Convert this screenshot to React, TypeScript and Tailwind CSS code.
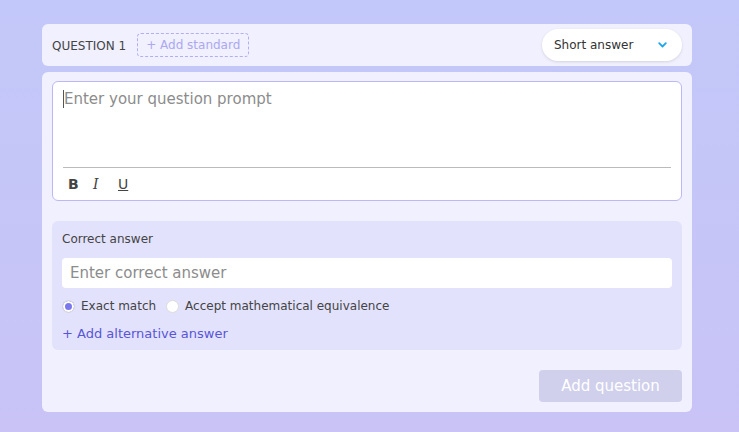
import React, { useState } from 'react';

export default function App() {
  const [match, setMatch] = useState('exact');

  return (
    <main
      className="min-h-screen w-full bg-gradient-to-b from-[#c2c8f9] to-[#c9c3f6] pl-[42px] pr-[47px] pt-[24px] pb-5 text-[#444]"
      style={{ fontFamily: "'DejaVu Sans', Verdana, sans-serif" }}
    >
      <div className="flex h-[42px] items-center justify-between rounded-md bg-[#f0f0fe] pl-[10px] pr-[10px]">
        <div className="flex items-center gap-[11px]">
          <span className="pt-px text-[12px] text-[#444]">QUESTION 1</span>
          <button className="h-[24px] rounded border border-dashed border-[#b3adf2] px-[8px] text-[12px] text-[#aca8f0]">
            + Add standard
          </button>
        </div>
        <button className="flex h-[32px] w-[140px] items-center justify-between rounded-full bg-white pl-[12px] pr-[15px] text-[12px] text-[#333] shadow-[0_1px_3px_rgba(0,0,0,0.12)]">
          Short answer
          <svg width="9" height="6" viewBox="0 0 9 6" fill="none">
            <path d="M1.2 1.2 L4.5 4.5 L7.8 1.2" stroke="#1fa8ee" strokeWidth="1.8" strokeLinecap="round" strokeLinejoin="round" />
          </svg>
        </button>
      </div>

      <div className="mt-[6px] rounded-md bg-[#f1f0fe] px-[10px] pt-[9px] pb-[10px]">
        <div className="flex h-[120px] flex-col rounded-md border border-[#bcb8f6] bg-white px-[10px]">
          <div className="flex-1 pt-[6px] text-[15px] text-[#8c8c8c]">
            <span className="border-l border-[#555]">Enter your question prompt</span>
          </div>
          <div className="h-px bg-[#bbb]" />
          <div className="flex h-[32px] items-center pl-[5px] text-[14px] text-[#444]">
            <span className="w-[25px] font-bold">B</span>
            <span className="w-[25px] italic" style={{ fontFamily: "'DejaVu Serif', serif" }}>I</span>
            <span className="w-[25px] underline">U</span>
          </div>
        </div>

        <div className="mt-[20px] rounded-md bg-[#e3e2fc] px-[10px] pt-[10px] pb-[8px]">
          <div className="text-[12px] leading-[16px] text-[#444]">Correct answer</div>
          <div className="mt-[11px] flex h-[30px] items-center rounded-sm bg-white px-[8px] text-[15px] text-[#8c8c8c]">
            Enter correct answer
          </div>
          <div className="mt-[10px] flex h-[16px] items-center text-[12px] text-[#444]">
            <button onClick={() => setMatch('exact')} className="flex items-center gap-[6px]">
              <span className={`flex h-[13px] w-[13px] items-center justify-center rounded-full border border-[#ddd] ${match === 'exact' ? 'bg-[#7b78ee] ring-2 ring-inset ring-white' : 'bg-white'}`} />
              Exact match
            </button>
            <button onClick={() => setMatch('equiv')} className="ml-[10px] flex items-center gap-[6px]">
              <span className={`flex h-[13px] w-[13px] items-center justify-center rounded-full border border-[#ddd] ${match === 'equiv' ? 'bg-[#7b78ee] ring-2 ring-inset ring-white' : 'bg-white'}`} />
              Accept mathematical equivalence
            </button>
          </div>
          <div className="mt-[12px] text-[13px] leading-[16px] text-[#5856d6]">+ Add alternative answer</div>
        </div>

        <div className="mt-[20px] flex justify-end">
          <button className="h-[32px] w-[143px] rounded bg-[#d0cfec] text-[15px] text-white">
            Add question
          </button>
        </div>
      </div>
    </main>
  );
}
